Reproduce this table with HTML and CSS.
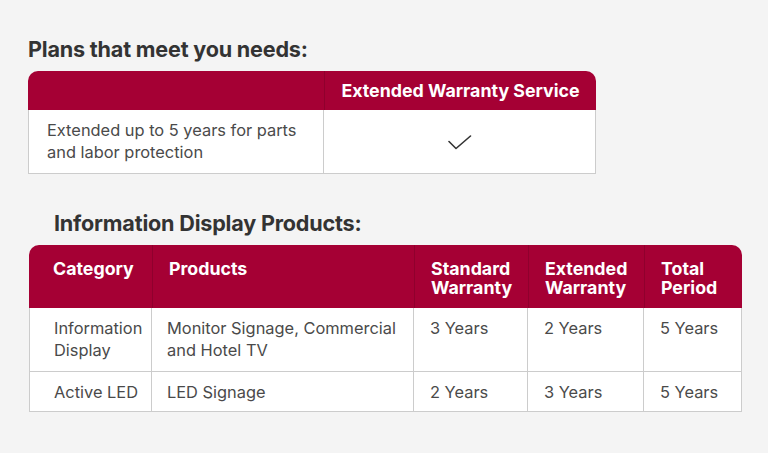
FILE: index.html
```html
<!DOCTYPE html>
<html lang="en">
<head>
<meta charset="utf-8">
<title>Warranty plans</title>
<link rel="stylesheet" href="styles.css">
</head>
<body>
<main class="page">
  <section class="block block-plans">
    <h2 class="title">Plans that meet you needs:</h2>
    <table class="grid plans">
      <colgroup><col class="c-desc"><col class="c-svc"></colgroup>
      <thead>
        <tr><th class="blank"></th><th class="center">Extended Warranty Service</th></tr>
      </thead>
      <tbody>
        <tr>
          <td class="desc">Extended up to 5 years for parts<br>and labor protection</td>
          <td class="center">
            <svg class="check" width="24" height="16" viewBox="0 0 24 16" aria-hidden="true"><path d="M1 6.5 L8 13.5 L22.5 1" fill="none" stroke="#333" stroke-width="1.6" stroke-linecap="round" stroke-linejoin="round"/></svg>
          </td>
        </tr>
      </tbody>
    </table>
  </section>

  <section class="block block-products">
    <h2 class="title indent">Information Display Products:</h2>
    <table class="grid products">
      <colgroup>
        <col class="c-cat"><col class="c-prod"><col class="c-std"><col class="c-ext"><col class="c-tot">
      </colgroup>
      <thead>
        <tr>
          <th class="first">Category</th>
          <th>Products</th>
          <th>Standard<br>Warranty</th>
          <th>Extended<br>Warranty</th>
          <th>Total<br>Period</th>
        </tr>
      </thead>
      <tbody>
        <tr class="row-tall">
          <td class="first">Information<br>Display</td>
          <td>Monitor Signage, Commercial<br>and Hotel TV</td>
          <td>3 Years</td>
          <td>2 Years</td>
          <td>5 Years</td>
        </tr>
        <tr class="row-short">
          <td class="first">Active LED</td>
          <td>LED Signage</td>
          <td>2 Years</td>
          <td>3 Years</td>
          <td>5 Years</td>
        </tr>
      </tbody>
    </table>
  </section>
</main>
</body>
</html>
```

FILE: styles.css
```css
* { box-sizing: border-box; }

html, body {
  margin: 0;
  padding: 0;
  background: #f4f4f4;
}

body {
  font-family: Inter, "Open Sans", "Liberation Sans", sans-serif;
  color: #4a4a4a;
}

.page {
  padding: 35px 0 0 28px;
  display: flex;
  flex-direction: column;
}

.title {
  margin: 0 0 8px 0;
  font-size: 21.6px;
  line-height: 28px;
  font-weight: 700;
  color: #333333;
  letter-spacing: -0.2px;
}

.title.indent { padding-left: 25px; }

.block-products { margin-top: 35px; margin-left: 1px; }

.grid {
  border-collapse: separate;
  border-spacing: 0;
  table-layout: fixed;
}

.grid th {
  background: #a50034;
  color: #ffffff;
  font-weight: 700;
  font-size: 17.8px;
  text-align: left;
  padding: 0;
}

.grid td {
  background: #ffffff;
  font-size: 16.4px;
  line-height: 22px;
  border-right: 1px solid #cccccc;
  border-bottom: 1px solid #cccccc;
  vertical-align: top;
}

.grid td:first-child { border-left: 1px solid #cccccc; }

.grid th:first-child { border-top-left-radius: 10px; }
.grid th:last-child { border-top-right-radius: 10px; }

/* Plans table */
.plans { width: 568px; }
.plans .c-desc { width: 296px; }
.plans .c-svc { width: 272px; }

.plans th {
  height: 39px;
  line-height: 22px;
  vertical-align: middle;
}
.plans th + th { border-left: 1px solid #8f002d; }

.plans td {
  padding: 9px 18px 10px 18px;
  height: 64px;
  vertical-align: middle;
}

.center { text-align: center !important; }

.check { display: inline-block; vertical-align: middle; margin-top: 1px; }

/* Products table */
.products { width: 713px; }
.products .c-cat { width: 123px; }
.products .c-prod { width: 262px; }
.products .c-std { width: 114px; }
.products .c-ext { width: 116px; }
.products .c-tot { width: 98px; }

.products th {
  line-height: 19px;
  padding: 14px 6px 11px 16px;
  height: 63px;
  vertical-align: top;
}
.products th + th { border-left: 1px solid #8f002d; }
.products th.first { padding-left: 24px; }

.products td {
  padding: 9px 6px 0 15px;
}
.products .row-tall td { height: 64px; }
.products .row-short td { height: 40px; }
.products td.first { padding-left: 24px; }
.products td:nth-child(n+3) { padding-left: 16px; }
```
